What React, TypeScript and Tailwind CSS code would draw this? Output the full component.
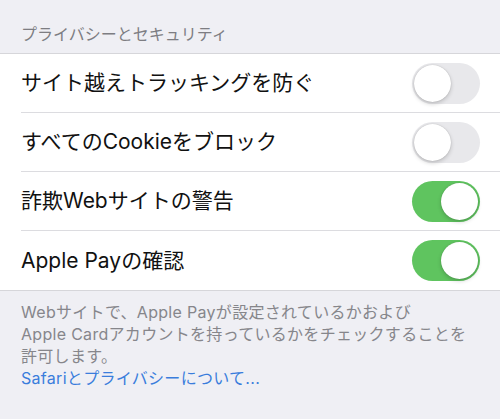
import React from "react";

const font = { fontFamily: 'Inter, "Noto Sans CJK JP", "Noto Sans", sans-serif' };

function Toggle({ on }: { on: boolean }) {
  return (
    <div
      className={
        "relative h-[41px] w-[68px] shrink-0 rounded-full " +
        (on ? "bg-[#5fc45f]" : "bg-[#e8e8eb]")
      }
    >
      <div
        className={
          "absolute top-[2px] h-[37px] w-[37px] rounded-full bg-white shadow-[0_2px_4px_rgba(0,0,0,0.18),0_0_1px_rgba(0,0,0,0.25)] " +
          (on ? "left-[29px]" : "left-[2px]")
        }
      />
    </div>
  );
}

const rows: { label: string; on: boolean }[] = [
  { label: "サイト越えトラッキングを防ぐ", on: false },
  { label: "すべてのCookieをブロック", on: false },
  { label: "詐欺Webサイトの警告", on: true },
  { label: "Apple Payの確認", on: true },
];

export default function App() {
  return (
    <div className="h-[419px] w-[500px] overflow-hidden bg-[#efeff4]" style={font}>
      <div className="px-[21px] pb-[9px] pt-[24px] text-[16px] leading-[20px] text-[#7d7d82]">
        プライバシーとセキュリティ
      </div>
      <div className="border-y border-[#d6d6da] bg-white">
        {rows.map((r, i) => (
          <div key={r.label} className="pl-[21px]">
            <div
              className={
                "flex h-[59px] items-center justify-between pr-[20px] " +
                (i < rows.length - 1 ? "border-b border-[#dcdce0]" : "")
              }
            >
              <span className="text-[21px] leading-[26px] text-[#111]">{r.label}</span>
              <Toggle on={r.on} />
            </div>
          </div>
        ))}
      </div>
      <div className="px-[21px] pt-[10px] text-[16px] leading-[22px] tracking-[0.3px] text-[#86868b]">
        <div>Webサイトで、Apple Payが設定されているかおよび</div>
        <div>Apple Cardアカウントを持っているかをチェックすることを</div>
        <div>許可します。</div>
        <div className="text-[#3a7ddc]">Safariとプライバシーについて...</div>
      </div>
    </div>
  );
}
